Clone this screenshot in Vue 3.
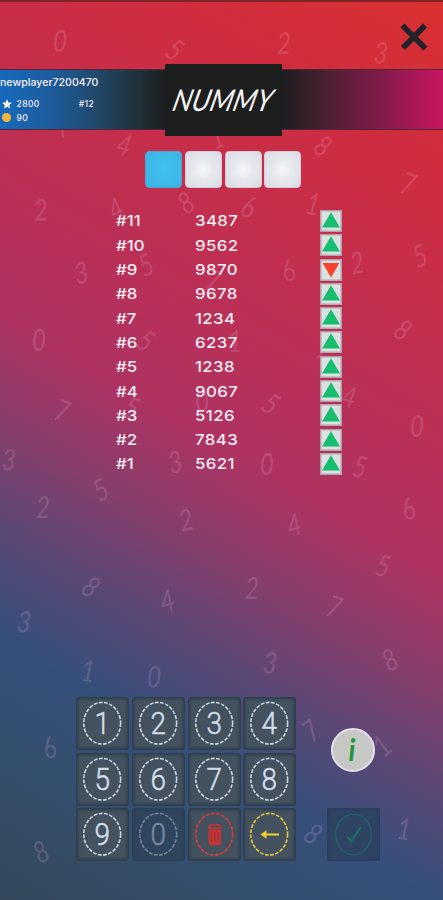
<script setup>
const scribbles = [
  ['0', 60, 41, 2], ['5', 175, 50, 34], ['2', 284, 43, 0], ['3', 381, 53, 4],
  ['7', 61, 127, -30], ['4', 124, 145, 16], ['1', 217, 138, -20], ['8', 323, 146, 34],
  ['7', 408, 184, 18], ['2', 41, 210, -3], ['4', 116, 209, -28], ['8', 186, 203, -32],
  ['6', 248, 207, 16], ['1', 313, 204, 10], ['3', 81, 273, -12], ['5', 146, 265, -24],
  ['6', 288, 271, -20], ['2', 357, 263, -10], ['5', 420, 256, -20], ['7', 213, 281, 15],
  ['0', 39, 340, 0], ['5', 146, 341, 34], ['1', 235, 341, 0], ['8', 403, 330, 34],
  ['7', 325, 349, 20], ['7', 62, 411, 18], ['5', 132, 408, 20], ['0', 202, 402, -8],
  ['5', 271, 404, 34], ['4', 349, 397, 14], ['0', 417, 426, 0], ['3', 9, 460, 4],
  ['3', 175, 462, -12], ['0', 267, 464, 0], ['5', 360, 467, 12], ['5', 101, 490, -26],
  ['2', 43, 507, 0], ['2', 186, 520, -14], ['4', 294, 525, -16], ['6', 408, 509, -20],
  ['5', 383, 566, 14], ['8', 91, 587, 34], ['4', 167, 601, -16], ['2', 252, 588, 0],
  ['7', 334, 607, 18], ['3', 24, 622, 6], ['1', 88, 671, 6], ['0', 154, 677, 2],
  ['3', 270, 663, 6], ['8', 390, 660, -28], ['6', 49, 748, -20], ['7', 311, 731, -38],
  ['1', 382, 746, -42], ['8', 313, 834, 34], ['1', 404, 829, 6], ['8', 41, 852, -28],
]
const guesses = [
  ['#11', '3487', 'up'], ['#10', '9562', 'up'], ['#9', '9870', 'down'], ['#8', '9678', 'up'],
  ['#7', '1234', 'up'], ['#6', '6237', 'up'], ['#5', '1238', 'up'], ['#4', '9067', 'up'],
  ['#3', '5126', 'up'], ['#2', '7843', 'up'], ['#1', '5621', 'up'],
]
const keys = ['1', '2', '3', '4', '5', '6', '7', '8', '9', '0', 'delete', 'back']
</script>

<template>
  <main class="screen">
    <svg class="scribbles" viewBox="0 0 443 900" aria-hidden="true">
      <text
        v-for="([digit, x, y, angle], i) in scribbles"
        :key="i"
        :transform="`translate(${x} ${y}) rotate(${angle}) scale(.8 1)`"
        y="10.5"
      >{{ digit }}</text>
    </svg>

    <div class="top">
      <button class="close" aria-label="Close">
        <svg viewBox="0 0 30 30"><path d="M3.5 3.5 26.5 26.5M26 3.5 4 26" /></svg>
      </button>
    </div>

    <header class="banner">
      <div class="player">
        <div class="name">newplayer7200470</div>
        <div class="stat">
          <svg class="star" viewBox="0 0 10 10"><path d="M5 .2 6.4 3.5 9.9 3.8 7.2 6.1 8.1 9.6 5 7.7 1.9 9.6 2.8 6.1 .1 3.8 3.6 3.5Z" /></svg>
          <span>2800</span>
          <span class="rank">#12</span>
        </div>
        <div class="stat">
          <i class="coin"></i>
          <span>90</span>
        </div>
      </div>
      <div class="plate">
        <svg viewBox="0 0 117 72">
          <text class="title" transform="translate(6 46.5) skewX(-14)" textLength="99" lengthAdjust="spacingAndGlyphs">NUMMY</text>
        </svg>
      </div>
    </header>

    <div class="slots">
      <i class="slot current"></i>
      <i class="slot"></i>
      <i class="slot"></i>
      <i class="slot"></i>
    </div>

    <section class="guesses">
      <div v-for="[id, code, trend] in guesses" :key="id" class="guess">
        <span class="id">{{ id }}</span>
        <span class="code">{{ code }}</span>
        <svg class="trend" viewBox="0 0 22 22">
          <rect x=".75" y=".75" width="20.5" height="20.5" />
          <path v-if="trend === 'up'" class="up" d="M11 2.2 20 17.5 H2Z" />
          <path v-else class="down" d="M2.6 4 H19.4 L11 18.5Z" />
        </svg>
      </div>
    </section>

    <section class="controls">
      <div class="keypad">
        <button v-for="k in keys" :key="k" class="key" :class="{ off: k === '0', red: k === 'delete', gold: k === 'back' }">
          <svg viewBox="0 0 53 53">
            <ellipse class="ring" cx="26.2" cy="26.2" rx="18.4" ry="20.8" />
            <g v-if="k === 'delete'">
              <path class="bin" d="M20.5 21.5h12.5v13.5q0 2.3-2.3 2.3h-7.9q-2.3 0-2.3-2.3Z" />
              <path class="lid" d="M20 20h13.5M20.3 20q1-3.6 6.4-3.6t6.4 3.6" />
              <path class="slats" d="M23.5 24v10M26.8 24v10M30.1 24v10" />
            </g>
            <g v-else-if="k === 'back'">
              <path class="arrow" d="M22 26.5h14" />
              <path class="head" d="M17.5 26.5 23.5 22.3v8.4Z" />
            </g>
            <text v-else class="digit" transform="translate(26.2 37) scale(.9 1)">{{ k }}</text>
          </svg>
        </button>
      </div>
      <div class="side">
        <button class="info" aria-label="Info">
          <svg viewBox="0 0 40 40"><text class="letter" transform="translate(19 31) scale(.9 1)">i</text></svg>
        </button>
        <button class="confirm" aria-label="Confirm">
          <svg viewBox="0 0 53 53">
            <ellipse cx="26.5" cy="26.5" rx="17.8" ry="20.3" />
            <path d="M20.5 28.5 24 33 34 19" />
          </svg>
        </button>
      </div>
    </section>
  </main>
</template>

<style>
body {
  margin: 0;
}
</style>

<style scoped>
.screen {
  position: relative;
  box-sizing: border-box;
  width: 443px;
  height: 900px;
  overflow: hidden;
  border-top: 2px solid #7f2329;
  display: flex;
  flex-direction: column;
  color: #f7edf4;
  font-family: Inter, "Liberation Sans", sans-serif;
  background: linear-gradient(31deg, #344859 0%, #344e6c 12%, #364f7b 23%, #5b4775 32%, #873e6b 41%, #ad3363 50%, #b73059 59%, #c82d48 76%, #d02d3c 88%, #da3030 100%);
}
button {
  border: 0;
  padding: 0;
  background: none;
}
svg {
  display: block;
  overflow: visible;
}
.scribbles {
  position: absolute;
  left: 0;
  top: -2px;
  width: 443px;
  height: 900px;
}
.scribbles text {
  font: italic 400 30px Lato, sans-serif;
  fill: #f0b5da;
  fill-opacity: .21;
  text-anchor: middle;
}
.top {
  height: 67px;
  display: flex;
  justify-content: flex-end;
  box-sizing: border-box;
  padding: 20px 14px 0 0;
  position: relative;
}
.close {
  width: 30px;
  height: 30px;
}
.close path {
  stroke: #20242a;
  stroke-width: 5.6;
}
.banner {
  position: relative;
  height: 61px;
  box-sizing: border-box;
  border-top: 1px solid #54243a;
  border-bottom: 1px solid #54243a;
  background: linear-gradient(90deg, #1769bd 0, #1d5c9b 52px, #214766 100px, #202e37 140px, #1e1f20 165px, #1e1f20 285px, #4b2030 325px, #7e1c4a 378px, #c4155f 438px);
  display: grid;
  grid-template-columns: 165px 117px;
  grid-template-rows: 59px;
  align-items: center;
}
.player {
  align-self: start;
  padding-top: 5.5px;
}
.name {
  height: 21px;
  font-size: 10.6px;
  line-height: 14px;
  font-weight: 500;
  white-space: nowrap;
}
.stat {
  display: flex;
  align-items: center;
  height: 14px;
  font-size: 8.5px;
  font-weight: 500;
  gap: 5px;
  padding-left: 1.5px;
  letter-spacing: .4px;
}
.star {
  width: 10px;
  height: 10px;
  fill: #fff;
}
.coin {
  width: 9px;
  height: 9px;
  margin-right: 1px;
  border-radius: 50%;
  background: #f5b836;
}
.rank {
  margin-left: 34px;
}
.plate {
  width: 117px;
  height: 72px;
  background: #1d1f1e;
}
.title {
  font: italic 400 30px Lato, sans-serif;
  fill: #f4f4f4;
}
.slots {
  position: relative;
  display: flex;
  gap: 2.8px;
  margin: 21px 0 0 145px;
}
.slot {
  width: 37px;
  height: 37px;
  box-sizing: border-box;
  border-radius: 4px;
  border: 1px solid #d6cbd8;
  background: radial-gradient(circle, #f8f8fa 0%, #e7e8ee 40%, #d9dde4 100%);
}
.slot.current {
  border-color: #4fa4d3;
  background: radial-gradient(circle, #40c1ed 0%, #3cb4e4 100%);
}
.guesses {
  position: relative;
  margin: 20.8px 0 0 116px;
}
.guess {
  display: grid;
  grid-template-columns: 79px 125px 22px;
  align-items: center;
  height: 24.3px;
  font-size: 15px;
  font-weight: 500;
}
.id,
.code {
  transform: scaleX(1.12);
  transform-origin: left;
}
.code {
  letter-spacing: .35px;
}
.trend {
  width: 22px;
  height: 22px;
}
.trend rect {
  fill: #dbe0e0;
  stroke: #b1a3ad;
  stroke-width: 1.5;
}
.up {
  fill: #16bf70;
}
.down {
  fill: #f8432f;
}
.controls {
  position: absolute;
  left: 76px;
  top: 695px;
  display: flex;
  gap: 30.5px;
}
.keypad {
  display: grid;
  grid-template-columns: repeat(4, 53px);
  grid-auto-rows: 53px;
  gap: 2.7px 2.8px;
}
.key {
  box-sizing: border-box;
  border-radius: 3px;
  background: #44525f;
  box-shadow: inset 0 0 3px 2px #2d3d4d;
}
.key svg,
.confirm svg {
  width: 53px;
  height: 53px;
}
.ring {
  fill: none;
  stroke: #c9d5e2;
  stroke-width: 1.6;
  stroke-dasharray: 3.8 1.4;
}
.digit {
  font: 300 31px Roboto, sans-serif;
  fill: #d3deec;
  stroke: #d3deec;
  stroke-width: .5;
  text-anchor: middle;
}
.off {
  background: #30455d;
  box-shadow: inset 0 0 3px 2px #2a4059;
}
.off svg {
  opacity: .43;
}
.red .ring {
  stroke: #d83b3b;
}
.bin {
  fill: #c83336;
}
.lid {
  fill: none;
  stroke: #c83336;
  stroke-width: 1.5;
}
.slats {
  stroke: #8c363e;
  stroke-width: 1;
}
.gold .ring {
  stroke: #e3c63a;
}
.arrow {
  stroke: #f3cc2d;
  stroke-width: 2;
}
.head {
  fill: #f3cc2d;
}
.side {
  display: flex;
  flex-direction: column;
  align-items: center;
  justify-content: space-between;
  box-sizing: border-box;
  padding-top: 31px;
}
.info {
  width: 44px;
  height: 44px;
  box-sizing: border-box;
  border: 2px solid #e6dfe9;
  border-radius: 50%;
  background: #c5c8c5;
}
.letter {
  font: italic 700 31px Lato, sans-serif;
  fill: #23923a;
  text-anchor: middle;
}
.confirm {
  width: 53px;
  height: 53px;
  border-radius: 2px;
  background: #2f4363;
  box-shadow: inset 0 0 3px 2px #2b3e5b;
}
.confirm ellipse {
  fill: none;
  stroke: #20666f;
  stroke-width: 1.1;
}
.confirm path {
  fill: none;
  stroke: #197568;
  stroke-width: 2;
}
</style>
